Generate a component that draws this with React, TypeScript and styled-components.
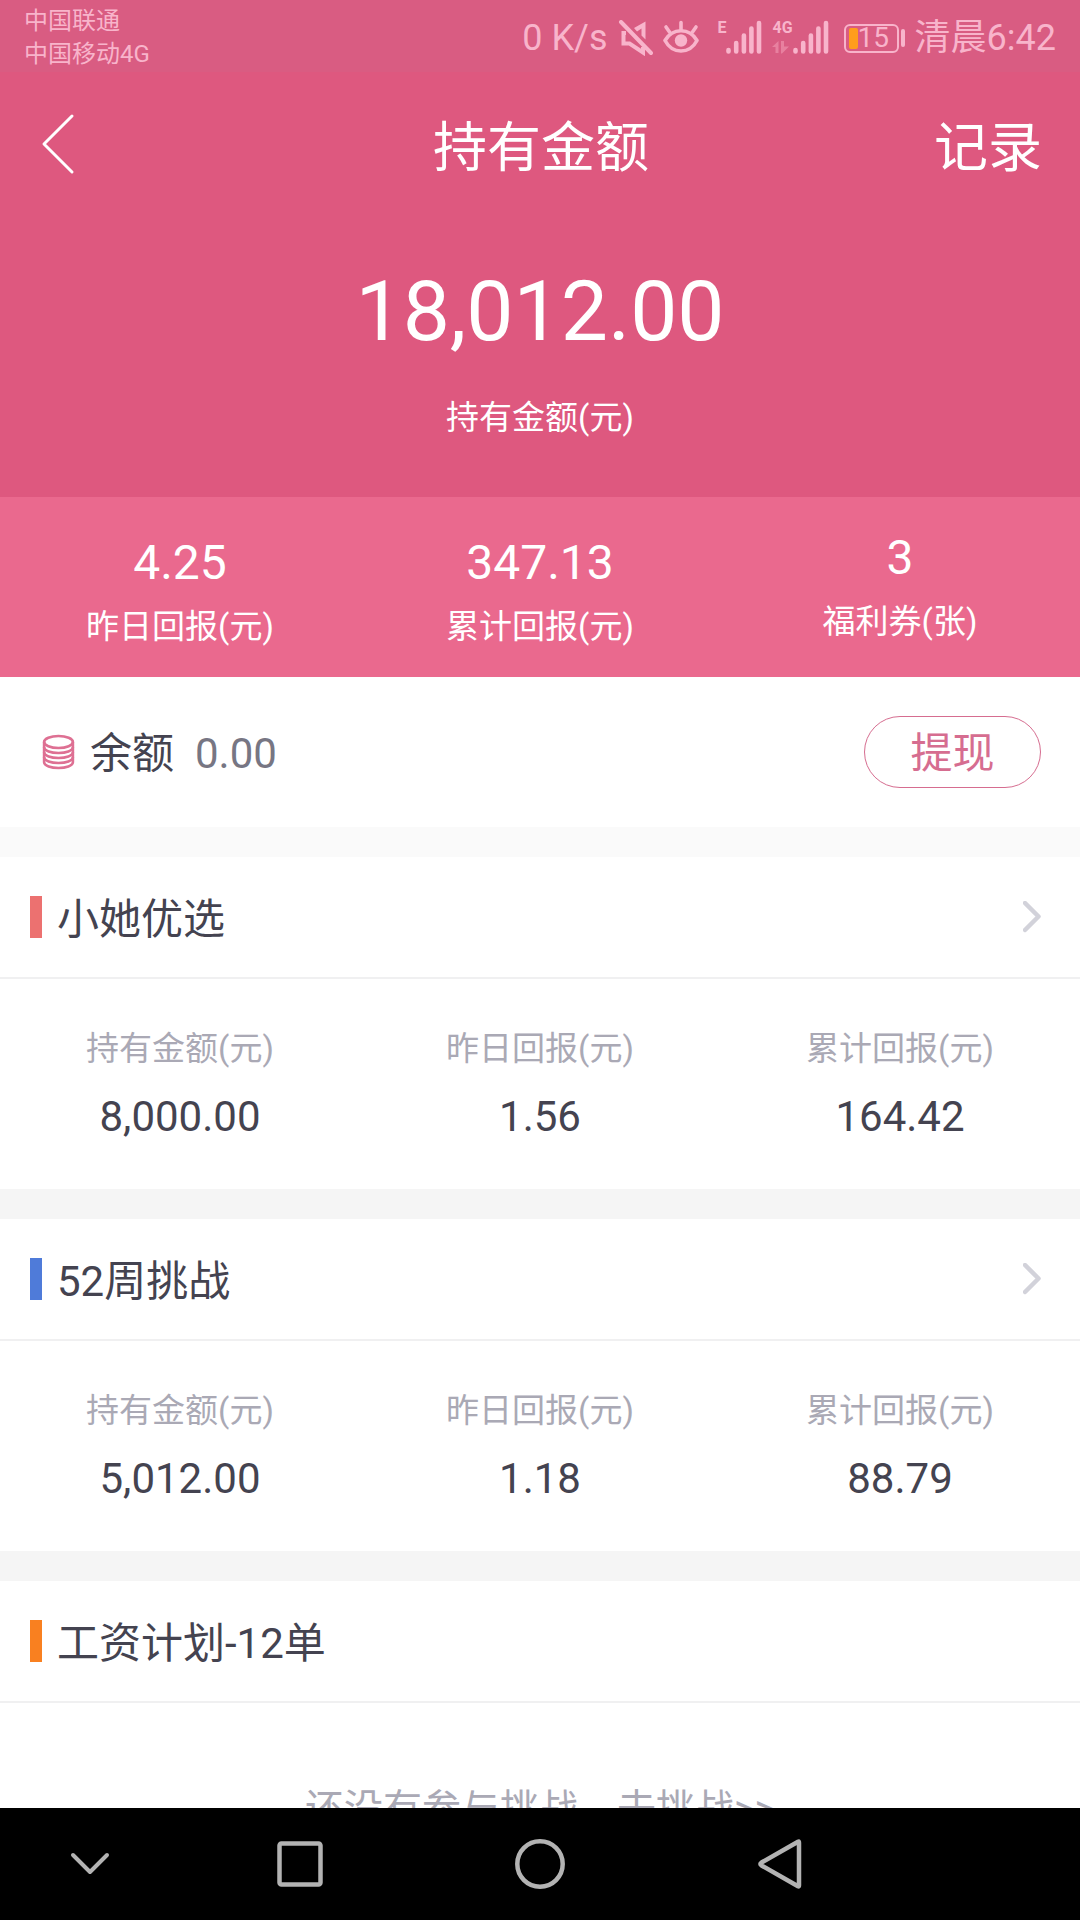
import React from "react";
import styled, { createGlobalStyle } from "styled-components";

const color = {
  status: "#d95c82",
  statusInk: "#f8b4cb",
  brand: "#de587f",
  brandLight: "#ea698e",
  accent: "#d66d90",
  ink: "#444350",
  inkSoft: "#777683",
  muted: "#aaa9b5",
  line: "#f0f0f1",
};

const GlobalStyle = createGlobalStyle`
  *, *::before, *::after { box-sizing: border-box; }
  body {
    margin: 0;
    background: #fff;
    font-family: Roboto, "Noto Sans CJK SC", sans-serif;
  }
  h1, h2, p, dl, dt, dd { margin: 0; font-weight: 400; }
  button { border: 0; background: none; padding: 0; font: inherit; color: inherit; cursor: pointer; }
  a { color: inherit; text-decoration: none; }
  svg { display: block; flex: none; }
`;

const Screen = styled.div`
  display: flex;
  flex-direction: column;
  height: 100vh;
`;

const StatusBar = styled.div`
  display: flex;
  flex: none;
  justify-content: space-between;
  align-items: center;
  height: 72px;
  padding: 4px 24px 0;
  background: ${color.status};
  color: ${color.statusInk};
`;

const Carriers = styled.div`
  font-size: 24px;
  line-height: 33px;
`;

const Indicators = styled.div`
  display: flex;
  align-items: center;
  gap: 10px;
  font-size: 36px;
  line-height: 44px;
`;

const Signal = styled.div`
  display: flex;
  align-items: stretch;
`;

const Network = styled.div`
  display: flex;
  flex-direction: column;
  justify-content: space-between;
  font-size: 16px;
  font-weight: 700;
  line-height: 16px;
`;

const Battery = styled.div`
  display: flex;
  align-items: center;
  gap: 2px;
  padding-left: 5px;
`;

const BatteryCell = styled.div`
  display: flex;
  align-items: center;
  width: 55px;
  height: 29px;
  padding: 0 3px;
  border: 2px solid ${color.statusInk};
  border-radius: 6px;
  font-size: 28px;
  line-height: 24px;
`;

const BatteryLevel = styled.div`
  width: 9px;
  height: 21px;
  border-radius: 2px;
  background: #ff9d1c;
`;

const BatteryTip = styled.div`
  width: 4px;
  height: 18px;
  border-radius: 2px;
  background: ${color.statusInk};
`;

const Content = styled.main`
  flex: 1;
  min-height: 0;
  overflow: hidden;
`;

const TitleBar = styled.header`
  display: grid;
  grid-template-columns: 1fr auto 1fr;
  align-items: center;
  height: 144px;
  padding: 0 38px 0 40px;
  background: ${color.brand};
  color: #fff;
  font-size: 54px;
  line-height: 72px;
`;

const PageTitle = styled.h1`
  padding-top: 10px;
  font-size: 54px;
`;

const RecordsButton = styled.button`
  justify-self: end;
  padding-top: 10px;
`;

const Hero = styled.section`
  padding: 46px 40px 57px;
  background: ${color.brand};
  color: #fff;
  text-align: center;
`;

const HeroAmount = styled.p`
  font-size: 84px;
  line-height: 100px;
`;

const HeroLabel = styled.p`
  margin-top: 34px;
  font-size: 33px;
  line-height: 44px;
`;

const Stats = styled.dl`
  display: grid;
  grid-template-columns: repeat(3, 1fr);
  align-items: center;
  height: 180px;
  background: ${color.brandLight};
  color: #fff;
  text-align: center;
`;

const Stat = styled.div<{ $money?: boolean }>`
  display: flex;
  flex-direction: column-reverse;
  gap: 14px;
  padding-top: ${(p) => (p.$money ? 10 : 0)}px;
`;

const StatLabel = styled.dt`
  font-size: 33px;
  line-height: 44px;
`;

const StatValue = styled.dd`
  font-size: 48px;
  line-height: 56px;
`;

const Balance = styled.section`
  display: flex;
  align-items: center;
  height: 150px;
  padding: 0 39px 0 42px;
  color: ${color.ink};
  font-size: 42px;
  line-height: 56px;
`;

const BalanceLabel = styled.span`
  padding: 4px 21px 0 15px;
`;

const BalanceValue = styled.span`
  padding-top: 4px;
  color: ${color.inkSoft};
`;

const WithdrawButton = styled.button`
  width: 177px;
  height: 72px;
  margin-left: auto;
  padding-top: 4px;
  border: 1px solid ${color.accent};
  border-radius: 36px;
  color: ${color.accent};
`;

const Product = styled.section<{ $gap: string }>`
  border-top: 30px solid ${(p) => p.$gap};
`;

const ProductHead = styled.a`
  display: flex;
  align-items: center;
  height: 122px;
  padding: 0 39px 0 30px;
  border-bottom: 2px solid ${color.line};
`;

const Marker = styled.span<{ $tint: string }>`
  width: 12px;
  height: 42px;
  margin-right: 15px;
  background: ${(p) => p.$tint};
`;

const ProductName = styled.h2`
  flex: 1;
  padding-top: 6px;
  color: ${color.ink};
  font-size: 42px;
  line-height: 56px;
`;

const Figures = styled.dl`
  display: grid;
  grid-template-columns: repeat(3, 1fr);
  padding: 48px 0;
  text-align: center;
`;

const FigureLabel = styled.dt`
  color: ${color.muted};
  font-size: 33px;
  line-height: 44px;
`;

const FigureValue = styled.dd`
  margin-top: 22px;
  color: ${color.ink};
  font-size: 42px;
  line-height: 48px;
`;

const EmptyLink = styled.a`
  display: block;
  padding: 80px 0;
  color: ${color.muted};
  font-size: 39px;
  line-height: 52px;
  text-align: center;
`;

const NavBar = styled.nav`
  display: grid;
  grid-template-columns: 3fr 4fr 4fr 4fr 3fr;
  flex: none;
  height: 112px;
  background: #000;
`;

const NavButton = styled.button`
  display: grid;
  place-items: center;
`;

const BackIcon = () => (
  <svg width="36" height="64" viewBox="0 0 36 64" fill="none" stroke="#fff" strokeWidth="3" strokeLinecap="round" strokeLinejoin="round">
    <path d="M32 4L4 32L32 60" />
  </svg>
);

const ChevronIcon = () => (
  <svg width="18" height="32" viewBox="0 0 18 32" fill="none" stroke="#d2d2da" strokeWidth="4.500" strokeLinecap="round" strokeLinejoin="round">
    <path d="M2 2L15.500 15.500L2 29" />
  </svg>
);

const CoinsIcon = () => (
  <svg width="33" height="36" viewBox="0 0 33 36" fill="none" stroke="#de7093" strokeWidth="2.600">
    <ellipse cx="16.500" cy="8" rx="14.400" ry="6" />
    <path d="M2.100 8V28C2.100 36 30.900 36 30.900 28V8" />
    <path d="M2.100 13C2.100 21 30.900 21 30.900 13M2.100 18C2.100 26 30.900 26 30.900 18M2.100 23C2.100 31 30.900 31 30.900 23" />
  </svg>
);

const MuteIcon = () => (
  <svg width="36" height="36" viewBox="0 0 36 36" fill="none" stroke={color.statusInk} strokeWidth="4">
    <path d="M4 2L34 33" strokeLinecap="round" />
    <path d="M9 13H6.500V23.500H12.500L26 32.500V27" />
    <path d="M17 8L28.500 1.500V19.500L24.500 15.500V8.500L20 11.500Z" fill={color.statusInk} stroke="none" />
  </svg>
);

const EyeIcon = () => (
  <svg width="44" height="36" viewBox="0 0 44 36" fill="none" stroke={color.statusInk} strokeWidth="3.600" strokeLinecap="round" strokeLinejoin="round">
    <path d="M2 20.500C9.500 7.500 26.500 7.500 34 20.500C26.500 34.500 9.500 34.500 2 20.500Z" />
    <circle cx="18" cy="20.500" r="6.200" fill={color.statusInk} stroke="none" />
    <path d="M18 2.500V9.500M3 7L6.500 12M33 7L29.500 12" />
  </svg>
);

const BarsIcon = () => (
  <svg width="36" height="36" viewBox="0 0 36 36" fill="none" stroke={color.statusInk} strokeWidth="4.600" strokeLinecap="round">
    <path d="M2.500 30V31.400M10.200 23V31.400M17.900 15.500V31.400M25.400 8.500V31.400M33 3V31.400" />
  </svg>
);

const DataIcon = () => (
  <svg width="18" height="15" viewBox="0 0 18 15" fill="#e8809f">
    <path d="M0 6L6.500 0V12H3.500V6ZM9 0H12V5.500H17L10 12.500H9Z" />
  </svg>
);

const navStroke = { fill: "none", stroke: "#b3b3b3", strokeWidth: 4.5, strokeLinejoin: "round" as const };

const HideIcon = () => (
  <svg width="52" height="52" viewBox="0 0 52 52" {...navStroke} strokeWidth={4} strokeLinecap="round">
    <path d="M9 17L26 34L43 17" />
  </svg>
);

const RecentsIcon = () => (
  <svg width="52" height="52" viewBox="0 0 52 52" {...navStroke}>
    <rect x="5.500" y="5.500" width="41" height="41" rx="2" />
  </svg>
);

const HomeIcon = () => (
  <svg width="52" height="52" viewBox="0 0 52 52" {...navStroke}>
    <circle cx="26" cy="26" r="22.700" />
  </svg>
);

const ReturnIcon = () => (
  <svg width="52" height="52" viewBox="0 0 52 52" {...navStroke}>
    <path d="M44 3.800C45 3.300 45 4 45 5V47C45 48 45 48.700 44 48.200L7.500 27.500C6 26.500 6 25.500 7.500 24.500Z" />
  </svg>
);

type Figure = { label: string; value: string };

const products: { name: string; tint: string; gap: string; figures: Figure[] }[] = [
  {
    name: "小她优选",
    tint: "#ec7170",
    gap: "#fafafa",
    figures: [
      { label: "持有金额(元)", value: "8,000.00" },
      { label: "昨日回报(元)", value: "1.56" },
      { label: "累计回报(元)", value: "164.42" },
    ],
  },
  {
    name: "52周挑战",
    tint: "#4f7bd9",
    gap: "#f5f5f5",
    figures: [
      { label: "持有金额(元)", value: "5,012.00" },
      { label: "昨日回报(元)", value: "1.18" },
      { label: "累计回报(元)", value: "88.79" },
    ],
  },
];

const stats = [
  { label: "昨日回报(元)", value: "4.25", money: true },
  { label: "累计回报(元)", value: "347.13", money: true },
  { label: "福利券(张)", value: "3", money: false },
];

export default function App() {
  return (
    <Screen>
      <GlobalStyle />
      <StatusBar>
        <Carriers>
          <div>中国联通</div>
          <div>中国移动4G</div>
        </Carriers>
        <Indicators>
          <span>0 K/s</span>
          <MuteIcon />
          <EyeIcon />
          <Signal>
            <Network>E</Network>
            <BarsIcon />
          </Signal>
          <Signal>
            <Network>
              4G
              <DataIcon />
            </Network>
            <BarsIcon />
          </Signal>
          <Battery>
            <BatteryCell>
              <BatteryLevel />
              15
            </BatteryCell>
            <BatteryTip />
          </Battery>
          <span>清晨6:42</span>
        </Indicators>
      </StatusBar>

      <Content>
        <TitleBar>
          <button type="button" aria-label="返回">
            <BackIcon />
          </button>
          <PageTitle>持有金额</PageTitle>
          <RecordsButton type="button">记录</RecordsButton>
        </TitleBar>

        <Hero>
          <HeroAmount>18,012.00</HeroAmount>
          <HeroLabel>持有金额(元)</HeroLabel>
        </Hero>

        <Stats>
          {stats.map((s) => (
            <Stat key={s.label} $money={s.money}>
              <StatLabel>{s.label}</StatLabel>
              <StatValue>{s.value}</StatValue>
            </Stat>
          ))}
        </Stats>

        <Balance>
          <CoinsIcon />
          <BalanceLabel>余额</BalanceLabel>
          <BalanceValue>0.00</BalanceValue>
          <WithdrawButton type="button">提现</WithdrawButton>
        </Balance>

        {products.map((p) => (
          <Product key={p.name} $gap={p.gap}>
            <ProductHead href="#">
              <Marker $tint={p.tint} />
              <ProductName>{p.name}</ProductName>
              <ChevronIcon />
            </ProductHead>
            <Figures>
              {p.figures.map((f) => (
                <div key={f.label}>
                  <FigureLabel>{f.label}</FigureLabel>
                  <FigureValue>{f.value}</FigureValue>
                </div>
              ))}
            </Figures>
          </Product>
        ))}

        <Product $gap="#f5f5f5">
          <ProductHead as="div">
            <Marker $tint="#f98020" />
            <ProductName>工资计划-12单</ProductName>
          </ProductHead>
          <EmptyLink href="#">还没有参与挑战，去挑战&gt;&gt;</EmptyLink>
        </Product>
      </Content>

      <NavBar>
        <NavButton type="button" aria-label="收起">
          <HideIcon />
        </NavButton>
        <NavButton type="button" aria-label="最近任务">
          <RecentsIcon />
        </NavButton>
        <NavButton type="button" aria-label="主屏幕">
          <HomeIcon />
        </NavButton>
        <NavButton type="button" aria-label="返回上一级">
          <ReturnIcon />
        </NavButton>
      </NavBar>
    </Screen>
  );
}
